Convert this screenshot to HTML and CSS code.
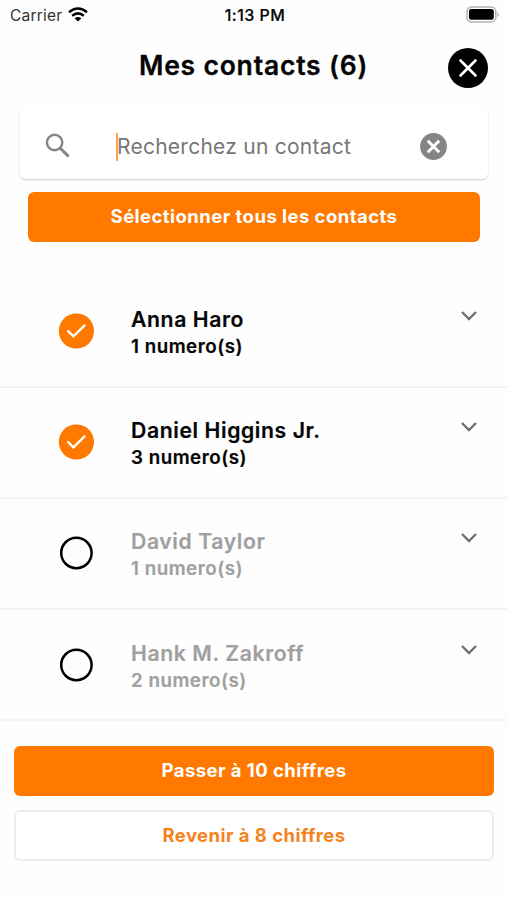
FILE: index.html
```html
<!DOCTYPE html>
<html lang="fr">
<head>
<meta charset="utf-8">
<title>Mes contacts</title>
<link rel="stylesheet" href="styles.css">
</head>
<body>
<div class="status">
  <div class="carrier"><span class="carrier-name">Carrier</span>
    <svg class="wifi" width="20" height="15" viewBox="0 0 20 15" fill="none" stroke="#000" stroke-width="2.5"><path d="M1 5.2Q10-2.2 19 5.2M4.2 8.7Q10 4 15.8 8.7"/><path d="M10 14.5 6.6 11.2Q10 8.6 13.4 11.2Z" fill="#000" stroke="none"/></svg>
  </div>
  <span class="time">1:13 PM</span>
  <svg class="battery" width="34" height="17" viewBox="0 0 34 17"><rect x="1" y=".9" width="28.8" height="15" rx="4.5" fill="#fff" stroke="#b4b4b4" stroke-width="1.5"/><rect x="3" y="3" width="24.8" height="10.8" rx="2.2"/><path d="M31.5 6v5q1.3-.8 1.3-2.5T31.5 6z" fill="#aaa"/></svg>
</div>
<header class="header">
  <h1 class="title">Mes contacts (6)</h1>
  <svg class="close" width="40" height="40" viewBox="0 0 40 40"><circle cx="20" cy="20" r="20"/><path d="m12.5 12.5 15 15m0-15-15 15" stroke="#fff" stroke-width="2.7" stroke-linecap="round"/></svg>
</header>
<div class="search">
  <svg class="lens" width="26" height="26" viewBox="0 0 26 26" fill="none" stroke="#858585" stroke-width="2.4"><circle cx="9.6" cy="9.5" r="7.7"/><path d="m15 15 8.6 8.4" stroke-width="3"/></svg>
  <span class="caret"></span>
  <span class="placeholder">Recherchez un contact</span>
  <svg class="clear" width="27" height="27" viewBox="0 0 27 27"><circle cx="13.5" cy="13.5" r="13.4" fill="#858585"/><path d="m7.8 7.8 11.4 11.4m0-11.4L7.8 19.2" stroke="#fff" stroke-width="3"/></svg>
</div>
<button class="button select-all"><span>Sélectionner tous les contacts</span></button>
<ul class="contacts">
  <li class="row">
    <svg class="mark" width="36" height="36" viewBox="0 0 36 36"><circle cx="18.4" cy="18" r="17.6" fill="#ff7900"/><path d="m10.2 18.2 5.2 5.1L26.6 12.4" fill="none" stroke="#fff" stroke-width="2.4" stroke-linecap="round"/></svg>
    <div class="info"><div class="name">Anna Haro</div><div class="count">1 numero(s)</div></div>
    <svg class="chevron" width="18" height="12" viewBox="0 0 18 12"><path d="m2 2 7 7 7-7" fill="none" stroke="#707070" stroke-width="2.4"/></svg>
  </li>
  <li class="row">
    <svg class="mark" width="36" height="36" viewBox="0 0 36 36"><circle cx="18.4" cy="18" r="17.6" fill="#ff7900"/><path d="m10.2 18.2 5.2 5.1L26.6 12.4" fill="none" stroke="#fff" stroke-width="2.4" stroke-linecap="round"/></svg>
    <div class="info"><div class="name">Daniel Higgins Jr.</div><div class="count">3 numero(s)</div></div>
    <svg class="chevron" width="18" height="12" viewBox="0 0 18 12"><path d="m2 2 7 7 7-7" fill="none" stroke="#707070" stroke-width="2.4"/></svg>
  </li>
  <li class="row off">
    <svg class="mark" width="36" height="36" viewBox="0 0 36 36"><circle cx="18.4" cy="18" r="15.2" fill="none" stroke="#000" stroke-width="2.5"/></svg>
    <div class="info"><div class="name">David Taylor</div><div class="count">1 numero(s)</div></div>
    <svg class="chevron" width="18" height="12" viewBox="0 0 18 12"><path d="m2 2 7 7 7-7" fill="none" stroke="#707070" stroke-width="2.4"/></svg>
  </li>
  <li class="row off">
    <svg class="mark" width="36" height="36" viewBox="0 0 36 36"><circle cx="18.4" cy="18" r="15.2" fill="none" stroke="#000" stroke-width="2.5"/></svg>
    <div class="info"><div class="name">Hank M. Zakroff</div><div class="count">2 numero(s)</div></div>
    <svg class="chevron" width="18" height="12" viewBox="0 0 18 12"><path d="m2 2 7 7 7-7" fill="none" stroke="#707070" stroke-width="2.4"/></svg>
  </li>
</ul>
<div class="actions">
  <button class="button"><span>Passer à 10 chiffres</span></button>
  <button class="button outline"><span>Revenir à 8 chiffres</span></button>
</div>
</body>
</html>
```
FILE: styles.css
```css
* { box-sizing: border-box; }
body {
  margin: 0;
  height: 900px;
  overflow: hidden;
  background: #fefefe;
  color: #050505;
  font-family: Inter, "Liberation Sans", sans-serif;
  white-space: nowrap;
}
svg { display: block; flex: none; }
.status {
  display: grid;
  grid-template-columns: 1fr auto 1fr;
  align-items: center;
  height: 30px;
  padding: 0 7px 0 10px;
  font-size: 15.5px;
}
.carrier { display: flex; align-items: center; gap: 6px; color: #333; }
.carrier-name { letter-spacing: 0.2px; }
.wifi { margin-top: -1px; }
.time { font-weight: 500; font-size: 16px; letter-spacing: 0.45px; -webkit-text-stroke: 0.2px; }
.battery { justify-self: end; margin-top: -2px; }
.header {
  display: grid;
  grid-template-columns: 1fr auto 1fr;
  align-items: center;
  height: 76px;
  padding: 0 19px;
}
.title {
  grid-column: 2;
  margin: -6px 0 0;
  font-size: 26.5px;
  font-weight: 600;
  letter-spacing: 0.8px;
  -webkit-text-stroke: 0.3px;
}
.close { justify-self: end; }
.search {
  display: flex;
  align-items: center;
  height: 71px;
  margin: 2px 19px 0 20px;
  padding: 5px 41px 0 25px;
  border-radius: 6px;
  background: #fff;
  box-shadow: 0 1px 2px rgba(0, 0, 0, 0.2);
}
.caret { width: 2px; height: 28px; margin: 2px 0 0 45px; background: #ffa04d; }
.placeholder { margin-left: -1px; font-size: 21px; color: #777; letter-spacing: 0.25px; }
.clear { margin-left: auto; }
.button {
  display: flex;
  align-items: center;
  justify-content: center;
  width: 100%;
  height: 50px;
  padding: 0 0 1px;
  border: 0;
  border-radius: 6px;
  background: #ff7900;
  color: #fff;
  font: 700 18.5px Inter, "Liberation Sans", sans-serif;
  letter-spacing: 0.45px;
}
.select-all { width: 452px; margin: 13px 0 0 28px; padding-bottom: 2px; }
.contacts { margin: 34.3px 0 0; padding: 0; list-style: none; }
.row {
  display: flex;
  height: 111.3px;
  padding: 36.6px 29px 0 58px;
  border-bottom: 2px solid #f3f3f3;
}
.info { margin-left: 37px; }
.name { margin-top: -8px; font-size: 21.2px; line-height: 28px; font-weight: 600; letter-spacing: 0.6px; -webkit-text-stroke: 0.2px; }
.count { font-size: 18.8px; line-height: 27px; font-weight: 600; letter-spacing: 0.5px; -webkit-text-stroke: 0.2px; }
.off .info { color: #a0a0a0; }
.chevron { margin: -3px 0 0 auto; }
.actions { display: grid; gap: 14px; padding: 24.2px 13px 0 14px; }
.outline { height: 51px; padding-bottom: 0; border: 2px solid #ececec; background: #fff; color: #f5821a; }
```
